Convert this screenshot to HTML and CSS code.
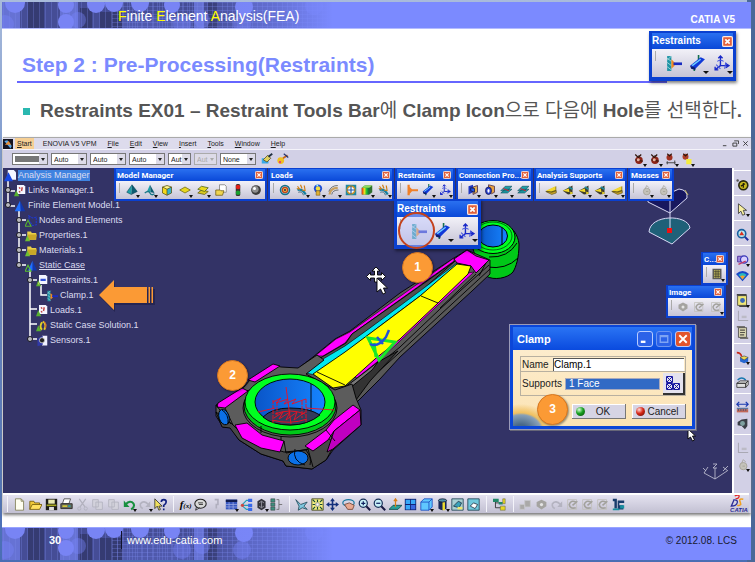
FILE: index.html
```html
<!DOCTYPE html>
<html lang="ko">
<head>
<meta charset="utf-8">
<title>Step 2 : Pre-Processing(Restraints)</title>
<link rel="stylesheet" href="styles.css">
</head>
<body>
<svg class="defs" aria-hidden="true">
  <defs>
    <linearGradient id="g-fade"><stop offset="0" stop-color="#7b8aff" stop-opacity="0"/><stop offset=".5" stop-color="#7b8aff" stop-opacity=".45"/><stop offset=".9" stop-color="#7b8aff"/></linearGradient>
    <linearGradient id="g-hole"><stop offset="0" stop-color="#0a55c8"/><stop offset="1" stop-color="#1684ff"/></linearGradient>
    <linearGradient id="g-rainbow"><stop offset="0" stop-color="#e02010"/><stop offset=".35" stop-color="#f0e020"/><stop offset=".65" stop-color="#20c030"/><stop offset="1" stop-color="#106040"/></linearGradient>
    <pattern id="p-grid" width="5" height="4" patternUnits="userSpaceOnUse"><path d="M0 .5H5M.5 0V4" stroke="#7c88ec" stroke-opacity=".3"/></pattern>
    <pattern id="p-lines" width="6" height="8" patternUnits="userSpaceOnUse"><path d="M1.500 0V8" stroke="#7c88e8" stroke-opacity=".3"/></pattern>
  </defs>
  <symbol id="band" viewBox="0 0 345 34">
    <path fill="#454d96" d="M0 0H345V34H0z"/>
    <path fill="#6672d4" d="M0 0H18V34H0zM58 0H76V34H58zM192 0H202V34H192z"/>
    <path fill="#353b72" d="M26 0H42V34H26zM78 6H90V34H78zM98 10H120V34H98zM206 0H216V34H206z"/>
    <path fill="#4f59ac" d="M122 14H190V34H122zM236 0H345V34H236z"/>
    <path fill="url(#p-lines)" d="M0 0H190V34H0z"/>
    <path fill="url(#p-grid)" d="M110 0H345V34H110z"/>
    <g fill="#7884f4"><circle cx="13" cy="1" r="10"/><circle cx="64" cy="3" r="8"/><circle cx="64" cy="20" r="8"/><circle cx="94" cy="2" r="9"/><circle cx="112" cy="1" r="9"/><circle cx="138" cy="1" r="9"/><circle cx="170" cy="3" r="8"/><circle cx="242" cy="5" r="9"/></g>
    <g fill="#7884fa" opacity=".4"><circle cx="3" cy="22" r="9"/><circle cx="76" cy="18" r="8"/><circle cx="180" cy="22" r="9"/><circle cx="200" cy="18" r="8"/><circle cx="240" cy="22" r="9"/><circle cx="312" cy="4" r="9"/></g>
    <path fill="url(#g-fade)" d="M200 0H345V34H200z"/>
  </symbol>
  <symbol id="x" viewBox="0 0 9 9"><rect x=".5" y=".5" width="8" height="8" rx="1" fill="#e2603a" stroke="#fbe8e0"/><path d="M2.7 2.7L6.3 6.3M6.3 2.7L2.7 6.3" stroke="#fff" stroke-width="1.4"/></symbol>
  <symbol id="tri" viewBox="0 0 16 16"><path d="M8 1L1 11l6 3z" fill="#1fa0a8"/><path d="M8 1L7 14l8-4z" fill="#0b5c70"/><path d="M8 1L1 11l6 3 8-4z" fill="none" stroke="#08384a" stroke-width=".7"/></symbol>
  <symbol id="trio" viewBox="0 0 16 16"><path d="M8 1L4 10l5 1z" fill="#1fa0a8"/><path d="M8 1l1 10 5 1z" fill="#0b5c70"/><path d="M1 12q5-4 7 0t6 1" fill="none" stroke="#1a7888" stroke-width="1.8"/></symbol>
  <symbol id="cube" viewBox="0 0 16 16"><path d="M2 4l6-2 6 2-6 3z" fill="#fff68a"/><path d="M2 4l6 3v8l-6-3z" fill="#f4d81c"/><path d="M14 4L8 7v8l6-3z" fill="#37b0c8"/><path d="M2 4l6-2 6 2v8l-6 3-6-3zM2 4l6 3 6-3M8 7v8" fill="none" stroke="#5a5310"/></symbol>
  <symbol id="sheet" viewBox="0 0 16 16"><path d="M1 8l7-4 7 4-7 4z" fill="#e8d820" stroke="#6c6410"/></symbol>
  <symbol id="stack" viewBox="0 0 16 16"><path d="M1 12l5-4 9 2-5 4z" fill="#d8c820" stroke="#5c5410"/><path d="M1 7l5-4 9 2-5 5z" fill="#e8d820" stroke="#48601a"/></symbol>
  <symbol id="fpage" viewBox="0 0 16 16"><path d="M6 1h7l2 2v8H6z" fill="#fff" stroke="#777"/><path d="M1 8h6l1 1h4l-2 6H1z" fill="#efd450" stroke="#6c5a10"/></symbol>
  <symbol id="traffic" viewBox="0 0 16 16"><rect x="5" y="0" width="6" height="16" rx="2" fill="#3a3030"/><circle cx="8" cy="4" r="3" fill="#e02018"/><circle cx="8" cy="11.500" r="3" fill="#18a030"/></symbol>
  <symbol id="ball" viewBox="0 0 16 16"><circle cx="8" cy="8" r="6.500" fill="#3c3c3c"/><circle cx="7" cy="7" r="4.500" fill="#8f8f8f"/><circle cx="6" cy="6" r="2" fill="#fff"/></symbol>
  <symbol id="target" viewBox="0 0 16 16"><circle cx="8" cy="8" r="6" fill="#9fd0d8" stroke="#157088" stroke-width="2"/><circle cx="8" cy="8" r="3.500" fill="#e8c040" stroke="#c04020" stroke-width="1.600"/><circle cx="8" cy="8" r="1.200" fill="#205"/></symbol>
  <symbol id="force" viewBox="0 0 16 16"><path d="M2 8q6-2 11 6" fill="none" stroke="#1580a0" stroke-width="3"/><path d="M2 3l3 4M6 1l2 5M11 2l1 6M1 6l4 1M8 8l5 1" stroke="#d08018" stroke-width="1.600"/><path d="M3 11q5-2 7 4" stroke="#205060" fill="none"/></symbol>
  <symbol id="bulb" viewBox="0 0 16 16"><circle cx="8" cy="6" r="5.500" fill="#2050d8"/><circle cx="8" cy="6" r="3" fill="#f4e040"/><path d="M5.500 9h5v6h-5z" fill="#e0b030" stroke="#705010" stroke-width=".7"/><path d="M6 2.500l2-1" stroke="#9ff" stroke-width="1.500"/></symbol>
  <symbol id="curve" viewBox="0 0 16 16"><path d="M2 14Q3 5 13 5" fill="none" stroke="#c8a060" stroke-width="3"/><path d="M1 10Q4 2 13 2M5 14Q6 8 14 8" fill="none" stroke="#4a5050"/></symbol>
  <symbol id="gear4" viewBox="0 0 16 16"><path d="M1 1h14v14H1z" fill="#2088a0"/><circle cx="8" cy="8" r="5" fill="#fff" stroke="#d09020" stroke-width="2"/><path d="M8 3v10M3 8h10" stroke="#1858b0" stroke-width="1.500"/></symbol>
  <symbol id="rainbow" viewBox="0 0 16 16"><path d="M1 5l4-3h10v9l-4 3H1z" fill="#307030"/><path d="M1 5h10v9H1z" fill="url(#g-rainbow)"/><path d="M1 5l4-3h10l-4 3z" fill="#90e060"/></symbol>
  <symbol id="clamp" viewBox="0 0 16 16"><path d="M2 1h4v14H2z" fill="#1d93a5"/><path d="M2 3l4 3M2 7l4 3M2 11l4 3M6 1L2 5" stroke="#bfe6e6" stroke-width=".7"/><path d="M6 4l3 3v3l-3 3z" fill="#f08a20"/><path d="M8 7h8v2.500H8z" fill="#1a2cc0"/></symbol>
  <symbol id="clampo" viewBox="0 0 16 16"><path d="M2 1h3v14H2zM5 4l3 3h8v2.500H8L5 13z" fill="#f08028"/></symbol>
  <symbol id="slider" viewBox="0 0 16 16"><path d="M9 0v5M5 10v5" stroke="#157050" stroke-width="1.500"/><path d="M1 10L11 2l4 2-9 9z" fill="#1038d8"/><path d="M3 10l8-6" stroke="#6fd0ff" stroke-width="1.300"/><path d="M1 10l1 3 4 1v-2z" fill="#0a1a70"/></symbol>
  <symbol id="iso" viewBox="0 0 16 16"><path d="M7 10V1M7 10L2 14M7 10h8M5 3l2-2 2 2M12 8l3 2-3 2M2 11v3h3" fill="none" stroke="#1828c8" stroke-width="1.300"/><path d="M4 6q3-2 6 0M11 13l1-6M3 9l4 4" fill="none" stroke="#4858e0"/></symbol>
  <symbol id="conn" viewBox="0 0 16 16"><path d="M2 3l6-2v10l-6 3z" fill="#2038c0"/><path d="M8 4l6-2v9l-6 3z" fill="#e0b050" stroke="#3a2050"/><path d="M5 5l5 1v5l-5-2z" fill="#2058e8" stroke="#101040"/></symbol>
  <symbol id="conn2" viewBox="0 0 16 16"><path d="M6 1l8 2v8l-4 2-4-3z" fill="#e8a040" stroke="#40284a"/><ellipse cx="6" cy="9" rx="4" ry="5" fill="#2840d0" stroke="#101040"/><ellipse cx="6" cy="9" rx="1.500" ry="2.500" fill="#fff"/></symbol>
  <symbol id="plate" viewBox="0 0 16 16"><path d="M1 12l6-5h9l-6 5zM1 9l6-6h9l-6 6z" fill="#20a0a8" stroke="#0a4858" stroke-width=".8"/><path d="M4 6l8 3" stroke="#d02030" stroke-width="1.300"/></symbol>
  <symbol id="supp" viewBox="0 0 16 16"><path d="M1 10L15 3v7l-5 3z" fill="#6c6420"/><path d="M1 9L14 3v5l-6 2z" fill="#f4d830"/><path d="M1 10l8 1 6-2v3l-6 2z" fill="#c8a428" stroke="#4a4010" stroke-width=".7"/></symbol>
  <symbol id="suppd" viewBox="0 0 16 16"><path d="M1 9L14 2v11l-6 1z" fill="#3e3c2c"/><path d="M1 9l8-3 1 5zM11 10l4 2-4 2z" fill="#f4dc28"/><path d="M9 4l5 3" stroke="#208898" stroke-width="2"/></symbol>
  <symbol id="weight" viewBox="0 0 16 16"><circle cx="9" cy="10" r="4.500" fill="#c4c2ba" stroke="#a29f94"/><path d="M7 6l2-4 3 3M8 10h3" stroke="#a29f94" fill="none"/></symbol>
  <symbol id="apple" viewBox="0 0 16 16"><circle cx="8" cy="9.500" r="5" fill="#8c2418"/><path d="M3 2l4 4 4-4M8 6V3M3 9l10 2" stroke="#30160c" stroke-width="1.600" fill="none"/><circle cx="7" cy="9" r="2" fill="#e8b0a0"/></symbol>
  <symbol id="appleb" viewBox="0 0 16 16"><circle cx="6" cy="6" r="4" fill="#a03020"/><path d="M3 1l3 3 3-3" stroke="#30160c" stroke-width="1.500" fill="none"/><path d="M2 13h12M3 11v4M13 10v5" stroke="#444" stroke-width="1.300"/></symbol>
  <symbol id="applec" viewBox="0 0 16 16"><circle cx="6" cy="5" r="4" fill="#b04028"/><path d="M3 1l3 3 3-3" stroke="#30160c" stroke-width="1.500" fill="none"/><path d="M7 8h7v7H7z" fill="#f4ec40"/></symbol>
  <symbol id="brush" viewBox="0 0 16 16"><path d="M1 7h9v7H1z" fill="#38a8e8"/><path d="M3 9l6-6 4 4-5 5z" fill="#e0d060" stroke="#504818"/><path d="M10 5l5-4" stroke="#203040" stroke-width="2.500"/></symbol>
  <symbol id="wand" viewBox="0 0 16 16"><circle cx="5" cy="10" r="4.500" fill="#f0c020"/><circle cx="4" cy="12" r="1.500" fill="#e83080"/><path d="M8 7l6-4" stroke="#c86818" stroke-width="2.500"/><path d="M9 1l6 5" stroke="#203070" stroke-width="1.500"/></symbol>
  <symbol id="new" viewBox="0 0 16 16"><path d="M3 1h7l3 3v11H3z" fill="#fffef0" stroke="#7c7a50"/><path d="M10 1v3h3" fill="none" stroke="#7c7a50"/></symbol>
  <symbol id="open" viewBox="0 0 16 16"><path d="M1 14V4h5l1 2h6v3" fill="#f0c838" stroke="#705808"/><path d="M1 14l3-6h12l-3 6z" fill="#ffe060" stroke="#705808"/></symbol>
  <symbol id="save" viewBox="0 0 16 16"><path d="M1 1h14v14H1z" fill="#1c1c18"/><path d="M4 2h8v5H4z" fill="#e8e8b0"/><path d="M2 8h12v2H2z" fill="#a8a820"/><path d="M5 11h6v4H5z" fill="#ddd"/></symbol>
  <symbol id="print" viewBox="0 0 16 16"><path d="M5 1h8l-2 6H3z" fill="#fff" stroke="#444"/><path d="M1 7h14v6H1z" fill="#68685a" stroke="#222"/><path d="M3 9h6v2H3z" fill="#d8d038"/><path d="M10 9h3v2h-3z" fill="#30a0a0"/></symbol>
  <symbol id="cut" viewBox="0 0 16 16"><path d="M4 1l7 10M12 1L5 11" stroke="#b2b1be" stroke-width="1.500"/><circle cx="4" cy="13" r="2" fill="none" stroke="#b2b1be"/><circle cx="12" cy="13" r="2" fill="none" stroke="#b2b1be"/></symbol>
  <symbol id="copy" viewBox="0 0 16 16"><path d="M2 2h7v9H2zM6 5h8v9H6z" fill="#d3d2dc" stroke="#b2b1be"/></symbol>
  <symbol id="undo" viewBox="0 0 16 16"><path d="M3 8q6-6 10-1 2 4-3 7" fill="none" stroke="#189040" stroke-width="2.500"/><path d="M1 3v8h7z" fill="#189040"/></symbol>
  <symbol id="redo" viewBox="0 0 16 16"><path d="M13 8Q7 2 3 7q-1 4 3 6" fill="none" stroke="#b4b3c0" stroke-width="2"/><path d="M15 4v7H9z" fill="#b4b3c0"/></symbol>
  <symbol id="help" viewBox="0 0 16 16"><path d="M1 1v12l3-3 2 5 2-1-2-4h4z" fill="#f0e060" stroke="#333"/><path d="M9 5q0-3 3-3t3 3q0 2-3 4v2M12 13v2" fill="none" stroke="#102080" stroke-width="2"/></symbol>
  <symbol id="bubble" viewBox="0 0 16 16"><ellipse cx="8" cy="7" rx="7" ry="5.500" fill="#d8d8d8" stroke="#222" stroke-width="1.300"/><path d="M3 11l-1 4 5-3M5 6h6M6 8h5" stroke="#222" fill="none"/></symbol>
  <symbol id="dot" viewBox="0 0 16 16"><path d="M7 2h4v6H9v5" fill="none" stroke="#b0afbe" stroke-width="2"/></symbol>
  <symbol id="table" viewBox="0 0 16 16"><path d="M1 2h14v12H1z" fill="#3858c0"/><path d="M1 2h14v3H1z" fill="#101c50"/><path d="M1 8h14M1 11h14M5 5v9M10 5v9" stroke="#a8b4e8" stroke-width=".8"/></symbol>
  <symbol id="calc" viewBox="0 0 16 16"><path d="M2 1h12v14H2z" fill="#5c5c58"/><path d="M4 3h8v10H4z" fill="#c8c060"/><path d="M4 5h8M4 8h8M4 11h8M6.500 3v10M9.500 3v10" stroke="#34342c"/></symbol>
  <symbol id="graph" viewBox="0 0 16 16"><path d="M2 9l6-6h5M2 9h11M2 9l6 5h5" fill="none" stroke="#20a0b8" stroke-width="1.400"/><path d="M10 1h5v4h-5zM10 7h5v4h-5zM10 12h5v4h-5z" fill="#3868e8"/><circle cx="3" cy="9" r="2" fill="#d04840"/></symbol>
  <symbol id="lump" viewBox="0 0 16 16"><path d="M3 4l5-3 5 3v8l-5 3-5-3z" fill="#34343c"/><path d="M5 6l3-2 3 2M5 10l3 2 3-2M8 4v8" stroke="#9a9aa4" fill="none"/></symbol>
  <symbol id="list" viewBox="0 0 16 16"><path d="M1 1h5v4H1zM1 6h5v4H1zM1 11h5v4H1z" fill="#409080" stroke="#333" stroke-width=".6"/><path d="M8 2h3v12H8M11 8h4" stroke="#666" fill="none"/></symbol>
  <symbol id="fly" viewBox="0 0 16 16"><path d="M1 2l6 6 8-3-4 5 4 4-6-2-5 3 1-5z" fill="#80c8e0" stroke="#204858"/></symbol>
  <symbol id="fit" viewBox="0 0 16 16"><path d="M1 1h14v14H1z" fill="#f4f080" stroke="#404018"/><path d="M2 2l3 3M14 2l-3 3M2 14l3-3M14 14l-3-3M8 2v3M8 11v3M2 8h3M11 8h3" stroke="#184838" stroke-width="1.500"/><path d="M6 6h4v4H6z" fill="#fff" stroke="#888"/></symbol>
  <symbol id="pan" viewBox="0 0 16 16"><path d="M8 0l3 4H9v3h3V5l4 3-4 3V9H9v3h2l-3 4-3-4h2V9H4v2L0 8l4-3v2h3V4H5z" fill="#14307c"/></symbol>
  <symbol id="rot" viewBox="0 0 16 16"><ellipse cx="8" cy="6" rx="7" ry="4" fill="none" stroke="#1878a0" stroke-width="1.500"/><path d="M3 8l6-2 6 3-2 5H7z" fill="#e8a890" stroke="#704030"/></symbol>
  <symbol id="zin" viewBox="0 0 16 16"><path d="M9 9l6 6" stroke="#181840" stroke-width="2.500"/><circle cx="6.500" cy="6.500" r="5" fill="#c8f0f8" stroke="#183058" stroke-width="1.500"/><path d="M4 6.500h5M6.500 4v5" stroke="#102060" stroke-width="1.500"/></symbol>
  <symbol id="zout" viewBox="0 0 16 16"><path d="M9 9l6 6" stroke="#181840" stroke-width="2.500"/><circle cx="6.500" cy="6.500" r="5" fill="#c8f0f8" stroke="#183058" stroke-width="1.500"/><path d="M4 6.500h5" stroke="#102060" stroke-width="1.500"/></symbol>
  <symbol id="normal" viewBox="0 0 16 16"><path d="M0 14l5-5h11l-5 5z" fill="#28a098" stroke="#0c4848"/><path d="M8 11V2M6 4l2-3 2 3" stroke="#d88018" stroke-width="1.500" fill="none"/></symbol>
  <symbol id="quad" viewBox="0 0 16 16"><path d="M1 1h14v14H1z" fill="#102070"/><path d="M2 2h5.500v5.500H2zM8.500 2H14v5.500H8.500zM2 8.500h5.500V14H2z" fill="#38a8f8"/><path d="M8.500 8.500H14V14H8.500z" fill="#3868e0"/></symbol>
  <symbol id="bcube" viewBox="0 0 16 16"><path d="M1 5l4-4h10v10l-4 4H1z" fill="#60c8ff" stroke="#1848c0"/><path d="M1 5h10v10M11 5l4-4" fill="none" stroke="#1848c0"/></symbol>
  <symbol id="cyl" viewBox="0 0 16 16"><path d="M3 3v10q5 4 10 0V3z" fill="#182858"/><path d="M8 4h3v11H8z" fill="#f0e030"/><ellipse cx="8" cy="3" rx="5" ry="2" fill="#5090a8" stroke="#101830"/></symbol>
  <symbol id="frame" viewBox="0 0 16 16"><path d="M1 1h14v14H1z" fill="#a8d0d4" stroke="#1c4050"/><path d="M3 10l6-6 4 2-3 6z" fill="#38a0b8" stroke="#234"/><path d="M8 11h6v3H8z" fill="#f0e870"/></symbol>
  <symbol id="frame2" viewBox="0 0 16 16"><path d="M1 1h14v14H1z" fill="#70c8dc" stroke="#1c4050"/><path d="M4 10l4-4 5 2-3 5z" fill="#fff" stroke="#234"/></symbol>
  <symbol id="tree" viewBox="0 0 16 16"><path d="M3 4v8h8M3 6h6" fill="none" stroke="#222"/><path d="M0 1h7v4H0zM7 5h5v3H7z" fill="#208868"/><path d="M9 10h6v5H9zM12 1h3v6h-3z" fill="#e8d820" stroke="#554" stroke-width=".6"/></symbol>
  <symbol id="gbox" viewBox="0 0 16 16"><path d="M1 8h6v6H1zM7 3h7v8H7z" fill="#aaa9a8" stroke="#c8c8cc"/></symbol>
  <symbol id="gdie" viewBox="0 0 16 16"><path d="M2 5l6-3 6 3v5l-6 4-6-4z" fill="#a4a3a0"/><circle cx="8" cy="8" r="2" fill="#e4e4e4"/></symbol>
  <symbol id="gcyc" viewBox="0 0 16 16"><path d="M2 2h11v12H2z" fill="none" stroke="#c0bfba"/><path d="M12 5Q6 2 4 8q1 6 8 4M8 9l6-5" fill="none" stroke="#a2a19c" stroke-width="2"/></symbol>
  <symbol id="mesh" viewBox="0 0 16 16"><path d="M1 1h5v3H1zM3 4h3v9H3zM7 3h8v3H9v3h5v5H7z" fill="#183c6c"/><path d="M1 13h8v2H1zM10 9h5v4h-5z" fill="#1890a0"/></symbol>
  <symbol id="watch" viewBox="0 0 16 16"><circle cx="9" cy="9" r="5.500" fill="#c8b820" stroke="#2a2a10" stroke-width="2"/><path d="M6 10l5-3M9 6v6" stroke="#201c08" stroke-width="1.500"/><circle cx="2" cy="3" r="1.500" fill="#555"/></symbol>
  <symbol id="arrow" viewBox="0 0 16 16"><path d="M3 1v12l3-3 2 5 3-1-2-5h4z" fill="#f8f0a0" stroke="#333"/></symbol>
  <symbol id="zoomc" viewBox="0 0 16 16"><path d="M10 10l5 5" stroke="#2030a0" stroke-width="2.500"/><circle cx="7" cy="7" r="5" fill="#b8e8f0" stroke="#1860a0" stroke-width="2"/><path d="M7 4l3 5H4z" fill="#d83020"/></symbol>
  <symbol id="mag" viewBox="0 0 16 16"><path d="M2 4h7v7H2z" fill="#a088e0" stroke="#402090"/><circle cx="10" cy="8" r="4.500" fill="#d8d0ff" stroke="#3838b8" stroke-width="1.500"/><path d="M3 14l9-4" stroke="#c03868" stroke-width="1.500"/></symbol>
  <symbol id="fan" viewBox="0 0 16 16"><path d="M0 6q8-7 16 0l-8 9z" fill="#1848c8"/><path d="M3 7q5-4 10 0l-5 6z" fill="#28b8c0"/><path d="M5 9q3-2 6 0l-3 4z" fill="#f0a030"/></symbol>
  <symbol id="scroll" viewBox="0 0 16 16"><path d="M3 2h10v12H3z" fill="#d8d4b0" stroke="#444"/><path d="M1 1h10M5 15h10M5 5h6M5 8h6M5 11h5" stroke="#54524a" stroke-width="1.500"/></symbol>
  <symbol id="scrolly" viewBox="0 0 16 16"><path d="M2 2h11v12H2z" fill="#f0e878" stroke="#404030"/><path d="M1 1h12M4 15h11" stroke="#444" stroke-width="2"/><circle cx="8" cy="8" r="3" fill="#3868b8"/></symbol>
  <symbol id="corner" viewBox="0 0 16 16"><path d="M3 1v12h12" fill="none" stroke="#a9a8b4" stroke-width="1.300"/><path d="M7 7h6v3H7z" fill="#bcbbc6"/></symbol>
  <symbol id="apply" viewBox="0 0 16 16"><path d="M1 2q5 0 6 5" stroke="#c82818" stroke-width="2" fill="none"/><path d="M5 8l5-2 5 2v5l-5 2-5-2z" fill="#2868d0"/><path d="M5 8l5-2 5 2-5 3z" fill="#f0d850" stroke="#333" stroke-width=".6"/></symbol>
  <symbol id="printer" viewBox="0 0 16 16"><path d="M2 5q5-5 10 0" stroke="#1878b0" stroke-width="1.800" fill="none"/><path d="M1 9l4-3h10l-3 3zM1 9h11v5H1zM12 9l3-3v5l-3 3z" fill="#e0e0e0" stroke="#333"/></symbol>
  <symbol id="measure" viewBox="0 0 16 16"><path d="M1 4h14M4 1L1 4l3 3M12 1l3 3-3 3" fill="none" stroke="#1838b0" stroke-width="1.500"/><path d="M1 10h14v4H1z" fill="#c06858"/><path d="M1 9h14M3 10v2M6 10v2M9 10v2M12 10v2" stroke="#204878"/></symbol>
  <symbol id="probe" viewBox="0 0 16 16"><path d="M2 6l5-3 7-1v9l-3 4-4-4-5-1z" fill="#3a3e46"/><circle cx="8" cy="8" r="3" fill="#7ea0a0"/></symbol>
  <symbol id="doc" viewBox="0 0 16 16"><path d="M4 0h9l2 2v10H4z" fill="#f4f6ff"/><path d="M6 5h7v3H6z" fill="#3050d8"/><path d="M3 7l4 8H0z" fill="#58b030"/><path d="M3 10l1 3" stroke="#e8e060"/></symbol>
  <symbol id="docr" viewBox="0 0 16 16"><path d="M4 0h9l2 2v10H4z" fill="#f4f6ff"/><path d="M7 3l1 2M11 3l-1 5M7 8l1 2" stroke="#c04848" stroke-width="2"/><path d="M3 7l4 8H0z" fill="#58b030"/></symbol>
  <symbol id="bluetri" viewBox="0 0 16 16"><path d="M8 1l7 14H9z" fill="#1038b0"/><path d="M8 1L1 15h8z" fill="#2070ff"/></symbol>
  <symbol id="greentri" viewBox="0 0 16 16"><path d="M10 1l6 13h-6z" fill="#1038b0"/><path d="M10 1L4 14h6z" fill="#2070ff"/><path d="M4 7l4 8H0z" fill="none" stroke="#58c030" stroke-width="1.500"/></symbol>
  <symbol id="docb" viewBox="0 0 16 16"><path d="M5 0h8l3 3v10H5z" fill="#f4f6ff"/><path d="M6 3l6 12H0z" fill="#1848e0"/></symbol>
  <symbol id="nodes" viewBox="0 0 16 16"><path d="M5 1l5 3 5-1v10l-5 1-4-6z" fill="none" stroke="#2038c8" stroke-width="1.500" stroke-dasharray="3 1"/><path d="M4 7l4 8H0z" fill="none" stroke="#58b030" stroke-width="1.500"/></symbol>
  <symbol id="fold" viewBox="0 0 16 16"><path d="M3 2h5l1 2h6v9H3z" fill="#e8d048"/><path d="M4 6h12l-2 7H4z" fill="#c8a828"/><path d="M3 7l4 8H0z" fill="#70c030"/></symbol>
  <symbol id="swirl" viewBox="0 0 16 16"><path d="M9 2q6 3 2 11M8 13Q4 9 8 3" fill="none" stroke="#e0d028" stroke-width="2.500"/><path d="M11 2q3 3 2 9" stroke="#d03030" fill="none"/><path d="M3 7l4 8H0z" fill="#58b030"/></symbol>
  <symbol id="sensor" viewBox="0 0 16 16"><path d="M8 1h7v13H8z" fill="#f0f0ff"/><path d="M2 5l7-4v12l-7 2z" fill="#3038a8"/><circle cx="8" cy="7" r="3.500" fill="#222" stroke="#ddd"/></symbol>
  <symbol id="catia" viewBox="0 0 16 16"><path d="M0 0h16v16H0z" fill="#141420"/><path d="M2 3l5-1 7 9-2 4z" fill="#58a8e8"/><path d="M3 9l6-6 4 6z" fill="#e89038"/></symbol>
  <symbol id="select3" viewBox="0 0 16 16"><path fill="none" stroke="#1818a0" d="M1.500 1.500h6v6h-6zM1.500 8.500h6v6h-6zM8.500 8.500h6v6h-6zM2 2l5 5M7 2L2 7M2 9l5 5M7 9l-5 5M9 9l5 5M14 9l-5 5"/></symbol>
</svg>

<div class="slide">
  <header class="band top-band">
    <svg class="band-art" preserveAspectRatio="xMinYMin slice" viewBox="0 0 345 26" aria-hidden="true"><use href="#band" width="345" height="34"/></svg>
    <p class="course"><em>F</em>inite <em>E</em>lement <em>A</em>nalysis(FEA)</p>
    <p class="product">CATIA V5</p>
  </header>

  <div class="heading">
    <h1>Step 2 : Pre-Processing(Restraints)</h1>
    <section class="palette large head-palette">
      <header><h3>Restraints</h3><button aria-label="Close"><svg><use href="#x"/></svg></button></header>
      <div class="tools">
        <button aria-label="Clamp"><svg><use href="#clamp"/></svg></button>
        <button class="dd" aria-label="Slider"><svg><use href="#slider"/></svg></button>
        <button class="dd" aria-label="Isostatic"><svg><use href="#iso"/></svg></button>
      </div>
    </section>
  </div>
  <h2>Restraints EX01 – Restraint Tools Bar<span>에</span> Clamp Icon<span>으로 다음에</span> Hole<span>를 선택한다</span>.</h2>

  <main class="app">
    <nav class="menubar">
      <svg class="app-icon"><use href="#catia"/></svg>
      <a class="start" href="#"><u>S</u>tart</a><a href="#">ENOVIA V5 VPM</a><a href="#"><u>F</u>ile</a><a href="#"><u>E</u>dit</a><a href="#"><u>V</u>iew</a><a href="#"><u>I</u>nsert</a><a href="#"><u>T</u>ools</a><a href="#"><u>W</u>indow</a><a href="#"><u>H</u>elp</a>
      <div class="win">
        <button aria-label="Minimize"><svg viewBox="0 0 8 8"><path d="M1 6.500h4"/></svg></button>
        <button aria-label="Restore"><svg viewBox="0 0 8 8"><path d="M2.500 1h5v3.500M1 3.500h4.500V7H1z"/></svg></button>
        <button aria-label="Close"><svg viewBox="0 0 8 8"><path d="M1.500 1.500l5 5M6.500 1.500l-5 5"/></svg></button>
      </div>
    </nav>

    <div class="props">
      <span class="combo swatch"><select aria-label="Color"><option></option></select></span>
      <span class="combo"><select aria-label="Transparency"><option>Auto</option></select></span>
      <span class="combo"><select aria-label="Line weight"><option>Auto</option></select></span>
      <span class="combo"><select aria-label="Line type"><option>Auto</option></select></span>
      <span class="combo short"><select aria-label="Point"><option>Aut</option></select></span>
      <span class="combo short off"><select aria-label="Render" disabled><option>Aut</option></select></span>
      <span class="combo"><select aria-label="Layer"><option>None</option></select></span>
      <div class="tools">
        <button aria-label="Painter"><svg><use href="#brush"/></svg></button>
        <button aria-label="Wizard"><svg><use href="#wand"/></svg></button>
      </div>
      <div class="tools render">
        <button class="dd" aria-label="Compute"><svg><use href="#apple"/></svg></button>
        <button class="dd" aria-label="Result"><svg><use href="#apple"/></svg></button>
        <button class="dd" aria-label="Adapt"><svg><use href="#appleb"/></svg></button>
        <button class="dd" aria-label="Store"><svg><use href="#applec"/></svg></button>
      </div>
    </div>

    <div class="work">
      <div class="viewport">
        <svg class="scene" viewBox="3 168 729 325" aria-hidden="true">
          <g stroke="#fff" stroke-width="1.500" fill="none">
            <path d="M8 181V206M19 211V266M30 270V339M41 285V295H47M8 191H15M8 206H15M19 220H26M19 235H26M19 250H26M19 265H26M30 280H37M30 309H37M30 324H37M30 339H37"/>
          </g>
          <g stroke="#15151f" fill="#b8b8c0"><circle cx="8" cy="190" r="2.500"/><circle cx="8" cy="205" r="2.500"/><circle cx="19" cy="220" r="2.500"/><circle cx="19" cy="235" r="2.500"/><circle cx="19" cy="250" r="2.500"/><circle cx="19" cy="265" r="2.500"/><circle cx="30" cy="280" r="2.500"/><circle cx="30" cy="339" r="2.500"/></g>

          <!-- connecting rod: small end -->
          <g stroke="#000" stroke-linejoin="round">
            <path fill="#00c818" d="M472 240C472 250 476 262 486 268L486 276C494 281 508 278 513 272C516 267 519 258 519 244C518 234 512 228 508 226z"/>
            <path fill="none" d="M487 267Q506 270 518 258M489 257Q508 258 517 243"/>
            <ellipse cx="493" cy="237" rx="22" ry="16.500" fill="#00ff20"/>
            <ellipse cx="493" cy="236" rx="19" ry="14" fill="none" stroke-width=".6"/>
            <ellipse cx="493" cy="236" rx="14.500" ry="11" fill="url(#g-hole)"/>
            <path d="M502 228V245" fill="none"/>
          </g>
          <!-- shank -->
          <g stroke="#000" stroke-width=".9" stroke-linejoin="round">
            <path fill="#585858" d="M300 367L313 357L335 339L350 331L400 293L454 258L467 250L490 260L490 274L472 291L400 357L380 379L355 404L340 396L300 380z"/>
            <path fill="#f0f" stroke-width=".6" d="M454 258L350 332L336 339L315 356L323 356L345 343L352 334L454 261z"/>
            <path fill="#505050" d="M455 261L420 286L352 334L346 343L322 357L312 366L306 373L318 364L350 343L420 292z"/>
            <path fill="#00e8f0" stroke-width=".6" d="M457 263L420 291L370 328L345 346L318 362L306 373L315 375L345 353L380 326L420 296L458 266z"/>
            <path fill="#f0f" d="M454 259L467 250L476 256L489 260L476 273L471 266L457 263z"/>
            <path fill="#f0f" stroke-width=".6" d="M474 272L438 305L400 341L377 362L357 378L352 376L375 357L398 337L436 302L468 273z"/>
            <path fill="#ff0" d="M457 264L471 266L468 274L438 303L400 339L375 359L345 386L333 388L313 374L345 352L380 326L420 296z"/>
            <path fill="none" d="M421 296L438 303M317 372L345 385M489 265L440 309L400 347L372 370L350 392M490 269L440 315L398 354L368 381M476 274L440 308M486 263L479 276"/>
            <path fill="#333" d="M378 362L398 351L370 381L356 400L347 397L353 385z"/>
            <path fill="#777" d="M350 388L372 370L378 362L356 379L341 390z"/>
          </g>
          <!-- big end -->
          <g stroke="#000" stroke-width=".9" stroke-linejoin="round">
            <path fill="#5c5c5c" d="M216 405L244 387L250 380L273 365L281 367L298 368L317 355L324 360L306 374L335 390L352 384L356 398L361 410L361 425L333 450L326 460L312 469L286 466L283 461L261 454L239 440L230 427L223 427L216 416z"/>
            <path fill="#484848" d="M216 412L232 424L240 432L262 445L284 452L306 450L326 436L335 444L326 460L312 469L286 466L283 461L261 454L239 440L230 428L222 427z"/>
            <path fill="#f0f" d="M248 380L273 364L280 366L255 382zM218 403L242 388L248 391L225 408L217 407z"/>
            <path fill="#f0f" d="M235 425L247 423L262 435L284 441L280 452L261 448L242 438z"/>
            <path fill="#f0f" d="M334 420L353 405L360 410L334 431L328 440L313 451L305 446L326 430z"/>
            <path fill="#c000c0" d="M334 431L360 410L361 425L333 449L327 452z"/>
            <path fill="none" d="M225 408L233 425M284 441L286 453L308 449L313 467M247 391L257 387M326 430L335 441M216 405L231 424"/>
            <ellipse cx="224" cy="417" rx="5" ry="8" transform="rotate(-18 224 417)" fill="#0b70e8"/>
            <path d="M222 410q7 4 6 14" fill="none"/>
            <ellipse cx="298" cy="458" rx="10" ry="7" fill="#0b70e8"/>
            <path d="M295 449q-3 12 10 16M306 450q6 8 4 15" fill="none"/>
            <ellipse cx="290" cy="408" rx="47" ry="29" fill="#5a5a5a"/>
            <ellipse cx="290" cy="406" rx="46" ry="29" fill="#00c818"/>
            <ellipse cx="290" cy="402" rx="45" ry="28" fill="#00ff20"/>
            <ellipse cx="290" cy="402" rx="35" ry="23" fill="url(#g-hole)"/>
            <path fill="#343a5c" d="M263 417Q272 408 290 408Q309 408 320 415Q308 425 290 425Q272 425 263 417z"/>
            <path d="M311 384V411M261 426V433M281 436V440" fill="none"/>
          </g>
          <g stroke="#f01020" fill="none" stroke-width=".9">
            <path d="M286 387L291 424M258 412L275 408M306 408L334 410"/>
            <path d="M273 400V423M306 399V422M277 402V415M302 401V418" stroke-dasharray="4 1"/>
            <path d="M273 402L281 398L276 403L288 399L284 404L296 399L292 404L303 400L306 399M274 418L283 412L279 419L290 412L286 420L297 412L294 420L305 412M272 420Q290 425 307 419M275 414Q290 408 305 414"/>
          </g>
          <path d="M368 338L395 342L379 360zM374 343L376 357" fill="none" stroke="#18e828" stroke-width="3"/>
          <path d="M370 344Q378 348 386 337L389 330M377 337L383 344" fill="none" stroke="#2050d8" stroke-width="2.500"/>

          <!-- compass -->
          <g stroke="#d8d8f4" fill="#17175e">
            <path d="M648 202V198L670 193L679 189Q688 190 687 198L670 213z"/>
            <path fill="#1f6078" d="M649 232C650 214 688 214 690 228L672 244z"/>
            <path d="M670 188V229"/>
            <path stroke="none" fill="#f01010" d="M667 228h5v5h-5z"/>
            <path d="M685 190l3 5" stroke="#c8b860"/>
          </g>
          <g stroke="#c8c8d8" fill="none" stroke-width=".8"><path d="M715 479L704 473M715 479V468M715 479L727 471M713 464h4l-4 4h4M703 468l3 3M708 467l-4 6M723 467l5 4M728 466l-5 5"/></g>
          <!-- pointers -->
          <g stroke="#000" fill="#fff" stroke-width=".9">
            <path d="M376 267l4 4h-2.500v4h4v-2.500l4 4-4 4v-2.500h-4v4h-3v-4h-4v2.500l-4-4 4-4v2.500h4v-4H372z"/>
            <path d="M377 278v14l3.500-3 2.500 5 2.500-1-2-5h4z"/>
            <path d="M688 429v10l2.500-2 2 4 2-1-2-4h3z"/>
          </g>
          <path d="M99 295L114 280V287H154V303H114V310z" fill="#1c1c44" opacity=".6" transform="translate(1 2)"/>
          <path d="M99 295L114 280V287H147V303H114V310zM148.500 287h1.500v16h-1.500zM151.500 287h1.500v16h-1.500z" fill="#fb9a35"/>
        </svg>

        <ul class="spec-tree">
          <li class="l0 active"><svg><use href="#docb"/></svg><span>Analysis Manager</span></li>
          <li class="l1"><svg><use href="#docr"/></svg><span>Links Manager.1</span></li>
          <li class="l1"><svg><use href="#bluetri"/></svg><span>Finite Element Model.1</span></li>
          <li class="l2"><svg><use href="#nodes"/></svg><span>Nodes and Elements</span></li>
          <li class="l2"><svg><use href="#fold"/></svg><span>Properties.1</span></li>
          <li class="l2"><svg><use href="#fold"/></svg><span>Materials.1</span></li>
          <li class="l2 current"><svg><use href="#greentri"/></svg><span>Static Case</span></li>
          <li class="l3"><svg><use href="#doc"/></svg><span>Restraints.1</span></li>
          <li class="l4"><svg><use href="#clamp"/></svg><span>Clamp.1</span></li>
          <li class="l3"><svg><use href="#docr"/></svg><span>Loads.1</span></li>
          <li class="l3"><svg><use href="#swirl"/></svg><span>Static Case Solution.1</span></li>
          <li class="l3"><svg><use href="#sensor"/></svg><span>Sensors.1</span></li>
        </ul>

        <div class="palette-row">
          <section class="palette w-model">
            <header><h3>Model Manager</h3><button aria-label="Close"><svg><use href="#x"/></svg></button></header>
            <div class="tools"><button class="dd" aria-label="Octree"><svg><use href="#tri"/></svg></button><button class="dd" aria-label="Mesh"><svg><use href="#trio"/></svg></button><button aria-label="3D property"><svg><use href="#cube"/></svg></button><button class="dd" aria-label="2D property"><svg><use href="#sheet"/></svg></button><button class="dd" aria-label="Composite"><svg><use href="#stack"/></svg></button><button aria-label="Import"><svg><use href="#fpage"/></svg></button><button aria-label="Check"><svg><use href="#traffic"/></svg></button><button aria-label="Material"><svg><use href="#ball"/></svg></button></div>
          </section>
          <section class="palette w-loads">
            <header><h3>Loads</h3><button aria-label="Close"><svg><use href="#x"/></svg></button></header>
            <div class="tools"><button aria-label="Pressure"><svg><use href="#target"/></svg></button><button class="dd" aria-label="Force"><svg><use href="#force"/></svg></button><button class="dd" aria-label="Acceleration"><svg><use href="#bulb"/></svg></button><button class="dd" aria-label="Line force"><svg><use href="#curve"/></svg></button><button aria-label="Displacement"><svg><use href="#gear4"/></svg></button><button class="dd" aria-label="Temperature"><svg><use href="#rainbow"/></svg></button><button class="dd" aria-label="Combined"><svg><use href="#force"/></svg></button></div>
          </section>
          <section class="palette w-rest">
            <header><h3>Restraints</h3><button aria-label="Close"><svg><use href="#x"/></svg></button></header>
            <div class="tools"><button aria-label="Clamp"><svg><use href="#clampo"/></svg></button><button class="dd" aria-label="Slider"><svg><use href="#slider"/></svg></button><button class="dd" aria-label="Isostatic"><svg><use href="#iso"/></svg></button></div>
          </section>
          <section class="palette w-conn">
            <header><h3>Connection Pro...</h3><button aria-label="Close"><svg><use href="#x"/></svg></button></header>
            <div class="tools"><button class="dd" aria-label="Face"><svg><use href="#conn"/></svg></button><button class="dd" aria-label="Distant"><svg><use href="#conn2"/></svg></button><button class="dd" aria-label="Weld"><svg><use href="#plate"/></svg></button><button class="dd" aria-label="Seam"><svg><use href="#plate"/></svg></button></div>
          </section>
          <section class="palette w-supp">
            <header><h3>Analysis Supports</h3><button aria-label="Close"><svg><use href="#x"/></svg></button></header>
            <div class="tools"><button aria-label="General"><svg><use href="#supp"/></svg></button><button class="dd" aria-label="Point"><svg><use href="#suppd"/></svg></button><button class="dd" aria-label="Line"><svg><use href="#suppd"/></svg></button><button class="dd" aria-label="Surface"><svg><use href="#suppd"/></svg></button><button class="dd" aria-label="Points"><svg><use href="#supp"/></svg></button></div>
          </section>
          <section class="palette w-mass">
            <header><h3>Masses</h3><button aria-label="Close"><svg><use href="#x"/></svg></button></header>
            <div class="tools"><button class="dd" aria-label="Mass"><svg><use href="#weight"/></svg></button><button class="dd" aria-label="Inertia"><svg><use href="#weight"/></svg></button></div>
          </section>
        </div>

        <section class="palette large canvas-palette">
          <header><h3>Restraints</h3><button aria-label="Close"><svg><use href="#x"/></svg></button></header>
          <div class="tools">
            <button aria-label="Clamp"><svg><use href="#clamp"/></svg></button>
            <button class="dd" aria-label="Slider"><svg><use href="#slider"/></svg></button>
            <button class="dd" aria-label="Isostatic"><svg><use href="#iso"/></svg></button>
          </div>
          <i class="ring"></i>
        </section>

        <section class="palette calc-palette">
          <header><h3>C...</h3><button aria-label="Close"><svg><use href="#x"/></svg></button></header>
          <div class="tools"><button class="dd" aria-label="Compute"><svg><use href="#calc"/></svg></button></div>
        </section>
        <section class="palette image-palette">
          <header><h3>Image</h3><button aria-label="Close"><svg><use href="#x"/></svg></button></header>
          <div class="tools"><button aria-label="Deform"><svg><use href="#gdie"/></svg></button><button aria-label="Von Mises"><svg><use href="#gcyc"/></svg></button><button class="dd" aria-label="Other"><svg><use href="#gcyc"/></svg></button></div>
        </section>

        <form class="dialog">
          <header><h3>Clamp</h3>
            <button type="button" aria-label="Minimize"><svg viewBox="0 0 15 15"><path d="M3 10.500h5" stroke-width="2.500"/></svg></button>
            <button type="button" class="dim" aria-label="Maximize"><svg viewBox="0 0 15 15"><path d="M3.500 4h8v7h-8zM3.500 5h8" stroke-width="1.500"/></svg></button>
            <button type="button" class="close" aria-label="Close"><svg viewBox="0 0 15 15"><path d="M3.500 3.500l8 8M11.500 3.500l-8 8" stroke-width="2"/></svg></button>
          </header>
          <div class="dialog-body">
            <div class="field"><label for="name">Name</label><input id="name" value="Clamp.1"></div>
            <div class="field supports"><label for="supports">Supports</label><input id="supports" value="1 Face" readonly><button type="button" aria-label="Multiple selection"><svg><use href="#select3"/></svg></button></div>
            <div class="actions"><button type="button"><i class="led ok"></i><span>OK</span></button><button type="button"><i class="led no"></i><span>Cancel</span></button></div>
          </div>
        </form>

        <b class="badge b1">1</b><b class="badge b2">2</b><b class="badge b3">3</b>
      </div>

      <aside class="side">
        <div><button aria-label="Workbench"><svg><use href="#watch"/></svg></button></div>
        <div><button class="dd" aria-label="Select"><svg><use href="#arrow"/></svg></button></div>
        <div><button aria-label="Zoom"><svg><use href="#zoomc"/></svg></button></div>
        <div><button class="dd" aria-label="Group"><svg><use href="#mag"/></svg></button><button aria-label="Results"><svg><use href="#fan"/></svg></button></div>
        <div><button class="dd" aria-label="Report"><svg><use href="#scrolly"/></svg></button><button aria-label="History"><svg><use href="#corner"/></svg></button><button aria-label="Listing"><svg><use href="#scroll"/></svg></button></div>
        <div><button class="dd" aria-label="Apply"><svg><use href="#apply"/></svg></button></div>
        <div><button aria-label="Storage"><svg><use href="#printer"/></svg></button></div>
        <div><button aria-label="Measure"><svg><use href="#measure"/></svg></button><button aria-label="Measure item"><svg><use href="#probe"/></svg></button></div>
        <div><button aria-label="Axis"><svg><use href="#corner"/></svg></button><button class="dd" aria-label="Weight"><svg><use href="#weight"/></svg></button></div>
      </aside>
    </div>

    <footer class="dock">
      <div class="tools g1"><button aria-label="New"><svg><use href="#new"/></svg></button><button aria-label="Open"><svg><use href="#open"/></svg></button><button aria-label="Save"><svg><use href="#save"/></svg></button><button aria-label="Print"><svg><use href="#print"/></svg></button><button aria-label="Cut"><svg><use href="#cut"/></svg></button><button aria-label="Copy"><svg><use href="#copy"/></svg></button><button aria-label="Paste"><svg><use href="#copy"/></svg></button><button class="dd" aria-label="Undo"><svg><use href="#undo"/></svg></button><button class="dd" aria-label="Redo"><svg><use href="#redo"/></svg></button><button aria-label="What's this"><svg><use href="#help"/></svg></button></div>
      <div class="tools g2"><button class="fx">f<small>(x)</small></button><button aria-label="Comment"><svg><use href="#bubble"/></svg></button><button aria-label="Check"><svg><use href="#dot"/></svg></button><button class="dd" aria-label="Table"><svg><use href="#table"/></svg></button><button aria-label="Graph"><svg><use href="#graph"/></svg></button><button class="dd" aria-label="Catalog"><svg><use href="#lump"/></svg></button><button aria-label="List"><svg><use href="#list"/></svg></button></div>
      <div class="tools g3"><button aria-label="Fly"><svg><use href="#fly"/></svg></button><button aria-label="Fit all"><svg><use href="#fit"/></svg></button><button aria-label="Pan"><svg><use href="#pan"/></svg></button><button aria-label="Rotate"><svg><use href="#rot"/></svg></button><button aria-label="Zoom in"><svg><use href="#zin"/></svg></button><button aria-label="Zoom out"><svg><use href="#zout"/></svg></button><button aria-label="Normal view"><svg><use href="#normal"/></svg></button><button aria-label="Multi view"><svg><use href="#quad"/></svg></button><button class="dd" aria-label="Isometric"><svg><use href="#bcube"/></svg></button><button class="dd" aria-label="Shading"><svg><use href="#cyl"/></svg></button><button aria-label="Hide"><svg><use href="#frame"/></svg></button><button aria-label="Swap"><svg><use href="#frame2"/></svg></button></div>
      <div class="tools g4"><button aria-label="Tree"><svg><use href="#tree"/></svg></button></div>
      <div class="tools g5"><button aria-label="Boxes"><svg><use href="#gbox"/></svg></button><button aria-label="Part"><svg><use href="#gdie"/></svg></button><button aria-label="Link"><svg><use href="#redo"/></svg></button><button aria-label="Update"><svg><use href="#gcyc"/></svg></button><button aria-label="Refresh"><svg><use href="#gcyc"/></svg></button><button aria-label="Cycle"><svg><use href="#gcyc"/></svg></button><button aria-label="Mesh"><svg><use href="#mesh"/></svg></button></div>
      <div class="brand">
        <svg viewBox="0 0 20 14"><path d="M5 1Q11-1 10 2T6 4" fill="none" stroke="#e02828" stroke-width="1.500"/><path d="M3 6Q9 5 8 9T1 13L4 6" fill="none" stroke="#2c2c98" stroke-width="1.500"/><path d="M15 5Q10 4 11 7T12 11Q10 13 8 12" fill="none" stroke="#f0a020" stroke-width="1.800"/></svg>
        <span>CATIA</span>
      </div>
    </footer>
  </main>

  <footer class="band bottom-band">
    <svg class="band-art" preserveAspectRatio="xMinYMin slice" viewBox="0 0 345 34" aria-hidden="true"><use href="#band" width="345" height="34"/></svg>
    <p class="page">30</p>
    <a href="#">www.edu-catia.com</a>
    <p class="copy">© 2012.08. LCS</p>
  </footer>
</div>
</body>
</html>
```
FILE: styles.css
```css
* { box-sizing: border-box; }
body {
  margin: 0;
  padding: 2px 4px 2px 2px;
  min-height: 100vh;
  display: flex;
  font-family: "Liberation Sans", "Noto Sans CJK KR", sans-serif;
  background: linear-gradient(90deg, transparent 99%, #4a6898 99%), linear-gradient(#a9bbdb, #6c8cc8 40%, #4a6eb4);
}
h1, h2, h3, p, ul { margin: 0; padding: 0; }
a { color: inherit; text-decoration: none; }
button { margin: 0; padding: 0; border: 0; background: none; font: inherit; color: inherit; }
input, select { margin: 0; font: inherit; border-radius: 0; }
svg { display: block; }
.defs { position: absolute; width: 0; height: 0; }

.slide { flex: 1; display: flex; flex-direction: column; background: #fff; min-width: 0; }

/* Coloured bands */
.band { position: relative; display: flex; align-items: center; background: #7b8aff; color: #fff; border-top: 1px solid #98a4ff; }
.band-art { position: absolute; left: 0; top: 0; width: 345px; height: 100%; }
.band > p, .band > a { position: relative; }
.top-band { height: 27px; border-top: 0; border-bottom: 1px solid #b4bcff; padding: 2px 16px 0 116px; justify-content: space-between; }
.course { font-size: 14px; line-height: 24px; }
.course em { font-style: normal; color: #ff0; }
.product { font-size: 10px; font-weight: bold; padding-top: 6px; }
.bottom-band { height: 33px; padding: 0 14px 8px 47px; font-size: 11px; margin-top: auto; }
.bottom-band .page { width: 72px; font-weight: bold; }
.bottom-band a { padding-left: 5px; border-left: 1px solid #10122c; line-height: 18px; }
.bottom-band .copy { margin-left: auto; font-size: 10px; color: #181a30; }

/* Headings */
.heading { position: relative; padding: 20px 0 0 15px; }
h1 { padding: 4px 0 4px 5px; margin-right: 84px; font-size: 21px; line-height: 24px; color: #7b8aff; border-bottom: 2px solid #66f; white-space: nowrap; }
h2 { display: flex; align-items: center; padding: 14px 0 12px 21px; font-size: 19px; line-height: 28px; color: #555; white-space: pre; }
h2::before { content: ""; width: 7px; height: 7px; margin-right: 10px; background: #2ab8b0; }
h2 span { font-weight: 400; }

/* Application window */
.app { background: #d2d0e6; border-top: 1px solid #aaa; box-shadow: 0 2px 3px #777; margin-left: 1px; font-size: 7px; }
.menubar { display: flex; align-items: center; height: 12px; gap: 11px; color: #222; background: #dddbec; border-bottom: 1px solid #f4f3fa; }
.menubar a { line-height: 11px; }
.menubar .start { background: #f6cf94; margin: 0 -2px 0 -9px; padding: 0 2px; }
.app-icon { width: 10px; height: 10px; }
.win { display: flex; gap: 3px; margin-left: auto; padding-right: 2px; }
.win svg { width: 7px; height: 7px; fill: none; stroke: #333; }

.props { display: flex; align-items: center; height: 18px; padding-left: 9px; gap: 3px; }
.combo { position: relative; display: block; width: 36px; height: 12px; }
.combo select { appearance: none; width: 100%; height: 100%; padding: 0 0 0 2px; border: 1px solid #777; background: #fff; color: #222; }
.combo.short { width: 23px; }
.combo::before { content: ""; position: absolute; right: 1px; top: 1px; width: 8px; height: 10px; background: #dddbe8; pointer-events: none; }
.combo::after { content: ""; position: absolute; right: 3px; top: 5px; border: 2px solid transparent; border-top: 3px solid #222; border-bottom: 0; pointer-events: none; }
.combo.swatch select { background-color: #777; box-shadow: inset 0 0 0 2px #fff; }
.combo.off select { color: #aaa; background: #dddbe8; border-color: #aaa; opacity: 1; }
.combo.off::after { border-top-color: #aaa; }
.props .render { margin-left: auto; padding-right: 56px; }

/* Tool buttons */
.tools { display: flex; align-items: center; }
.tools button, .side button { position: relative; width: 16px; height: 16px; display: grid; place-items: center; }
.tools svg, .side svg { width: 12px; height: 12px; }
.dd::after { content: ""; position: absolute; right: 0; bottom: 0; border: 2px solid transparent; border-top: 3px solid #111; border-bottom: 0; }

.work { display: flex; }
.viewport { position: relative; flex: 1; min-width: 0; height: 325px; overflow: hidden; background: #336; }
.scene { position: absolute; left: 0; top: 0; width: 729px; height: 325px; }
.side { width: 19px; border-left: 2px solid #fff; display: flex; flex-direction: column; gap: 3px; padding-top: 2px; }
.side div { border-top: 1px solid #fff; padding-top: 5px; }
.side svg { width: 13px; height: 13px; }

/* Specification tree */
.spec-tree { position: relative; list-style: none; color: #dcdcf0; font-size: 9px; line-height: 15px; }
.spec-tree li { display: flex; align-items: center; gap: 2px; height: 15px; }
.spec-tree svg { width: 12px; height: 12px; flex: none; }
.l0 { padding-left: 1px; }
.l1 { padding-left: 11px; }
.l2 { padding-left: 22px; }
.l3 { padding-left: 33px; }
.l4 { padding-left: 43px; }
.active span { background: #3f83e0; line-height: 11px; }
.current span { text-decoration: underline; }

/* Floating palettes */
.palette { border: 2px solid #0a40d0; border-top-width: 1px; background: #0d4fe0; color: #fff; }
.palette header { display: flex; align-items: center; justify-content: space-between; height: 12px; padding: 0 2px 0 1px; background: linear-gradient(#2a70f0, #0a48d8); }
.palette h3 { font: bold 8px/11px Roboto, sans-serif; white-space: nowrap; }
.palette header button svg { width: 8px; height: 8px; }
.palette .tools { height: 18px; justify-content: space-around; padding-left: 7px; background: linear-gradient(#f2f1f8, #c6c4d6); position: relative; }
.palette .tools::before { content: ""; position: absolute; left: 3px; top: 2px; width: 1px; height: 10px; background: #aaa; }
.palette-row { position: absolute; left: 111px; top: 0; display: flex; gap: 1px; }
.w-model { width: 153px; }
.w-loads { width: 126px; }
.w-rest { width: 60px; }
.w-conn { width: 77px; }
.w-supp { width: 93px; }
.w-mass { width: 46px; }
.palette.large { width: 87px; border-width: 2px 3px 4px; box-shadow: 1px 2px 3px rgba(0, 0, 0, .5); position: absolute; }
.large header { height: 16px; padding: 0; }
.large h3 { font: bold 10px/14px "Liberation Sans", sans-serif; }
.palette.large header button svg { width: 11px; height: 11px; }
.palette.large .tools { height: 28px; padding-left: 9px; }
.large .tools button { width: 24px; height: 26px; }
.large .tools svg { width: 17px; height: 17px; }
.large .dd::after { border-width: 3px 3px 0; bottom: 2px; }
.head-palette { right: 15px; top: 2px; }
.canvas-palette { left: 391px; top: 31px; }
.ring { position: absolute; left: 1px; top: 11px; width: 37px; height: 37px; border: 2px solid #c4421c; border-radius: 50%; background: rgba(190, 195, 250, .5); }
.calc-palette { position: absolute; right: 4px; top: 84px; width: 27px; }
.calc-palette .tools { padding-left: 5px; }
.image-palette { position: absolute; right: 6px; top: 117px; width: 60px; }

/* Clamp dialog */
.dialog { position: absolute; left: 506px; top: 156px; width: 187px; border: 1px solid #9a9ab8; background: #0b46d8; padding: 2px 3px 3px; box-shadow: 1px 1px 0 #667; font-size: 10px; color: #222; }
.dialog header { display: flex; align-items: center; gap: 3px; height: 23px; padding: 0 1px 0 4px; background: linear-gradient(#2a74f4, #0a4ade); }
.dialog h3 { flex: 1; font-size: 11px; color: #fff; }
.dialog header button { width: 16px; height: 16px; border: 1px solid #b8ccff; border-radius: 3px; background: #2c62e8; }
.dialog header svg { fill: none; stroke: #fff; }
.dialog header .dim svg { stroke: #7ea4f4; }
.dialog header .dim { border-color: #6c94f0; }
.dialog header .close { background: #e2542c; }
.dialog-body { padding: 6px 6px 7px 7px; background: radial-gradient(ellipse 34px 26px at 8px 80px, #486888 0 20%, #88a0b8 58%, #f0c060 66%, transparent), linear-gradient(#fdeccc, #fbe3b4); }
.field { display: flex; align-items: center; height: 16px; padding: 1px; border: 1px solid #b8b0a0; }
.field label { width: 31px; }
.field input { flex: 1; min-width: 0; height: 13px; padding: 0; border: 1px solid #555; border-right: 0; border-bottom: 0; background: #fff; }
.supports { height: 24px; border-top: 0; padding: 0; }
.field.supports label { width: 44px; padding-left: 1px; }
.field.supports input { height: 12px; border: 1px solid #aab; background: #316ac5; color: #fff; padding-left: 3px; }
.supports button { width: 22px; height: 22px; margin-left: 3px; display: grid; place-items: center; background: #e4e2ee; border-right: 2px solid #333; border-bottom: 2px solid #333; }
.supports svg { width: 16px; height: 16px; }
.actions { display: flex; justify-content: flex-end; gap: 6px; padding-top: 8px; }
.actions button { display: flex; align-items: center; width: 54px; height: 15px; padding: 0 4px; background: #d6d4e4; border-right: 1px solid #777; border-bottom: 1px solid #777; box-shadow: inset 1px 1px 0 #fff; }
.actions span { flex: 1; text-align: center; }
.led { width: 9px; height: 9px; border-radius: 50%; }
.led.ok { background: radial-gradient(circle at 35% 30%, #dfd, #18a020 45%, #064008); }
.led.no { background: radial-gradient(circle at 35% 30%, #fdd, #d82818 45%, #500804); }

.badge { position: absolute; width: 31px; height: 31px; border: 1px solid #d87820; border-radius: 50%; background: #fb9a35; color: #fff; font-size: 12px; line-height: 29px; text-align: center; box-shadow: 1px 1px 2px rgba(0, 0, 0, .4); }
.b1 { left: 399px; top: 84px; }
.b2 { left: 214px; top: 192px; }
.b3 { left: 534px; top: 226px; }

/* Bottom toolbar */
.dock { display: flex; align-items: center; height: 20px; border-top: 2px solid #fff; margin-right: 2px; padding-left: 2px; background: linear-gradient(#e4e2f0, #c2c0d2); }
.dock .tools { display: grid; grid-auto-flow: column; grid-auto-columns: minmax(0, 1fr); justify-items: center; border-left: 1px solid #f4f4fa; margin-left: 2px; padding-left: 4px; margin-right: 3px; }
.g1 { width: 161px; }
.g2 { width: 111px; }
.g3 { width: 192px; }
.g4 { width: 22px; }
.g5 { width: 113px; }
.dock svg { width: 13px; height: 13px; }
.tools .fx { display: block; font: italic bold 11px/16px "Liberation Serif", serif; white-space: nowrap; }
.fx small { font-size: 7px; }
.brand { margin-left: auto; text-align: center; font: italic bold 6px/6px "Liberation Sans", sans-serif; color: #2c2c98; }
.dock .brand svg { width: 20px; height: 12px; }
```
